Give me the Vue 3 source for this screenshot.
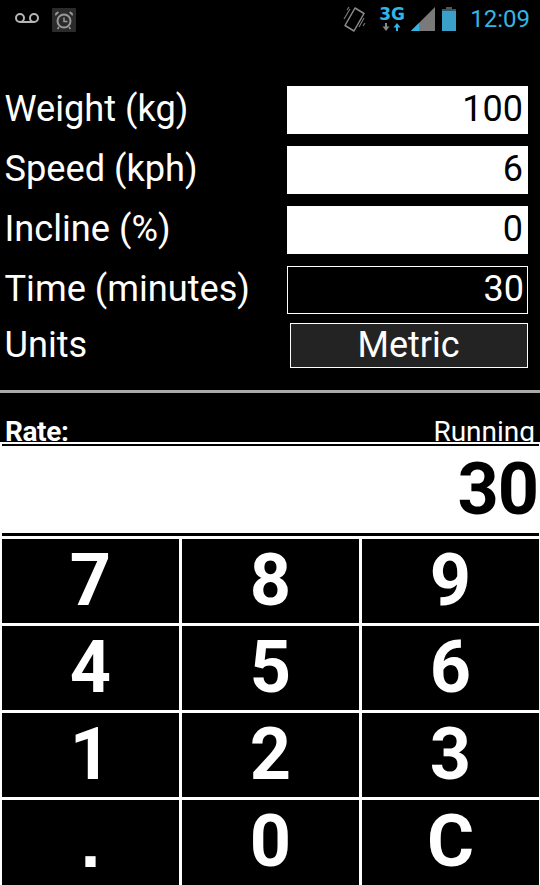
<script setup>
const rows = [
  { label: 'Weight (kg)', value: '100', cls: 'solid' },
  { label: 'Speed (kph)', value: '6', cls: 'solid' },
  { label: 'Incline (%)', value: '0', cls: 'solid' },
  { label: 'Time (minutes)', value: '30', cls: 'outline' },
]
const keys = ['7', '8', '9', '4', '5', '6', '1', '2', '3', '.', '0', 'C']
</script>

<template>
  <div class="screen">
    <header class="status">
      <div class="status-left">
        <svg class="voicemail" width="24" height="10" viewBox="0 0 24 10">
          <circle cx="5" cy="5" r="4" fill="none" stroke="#b5b5b5" stroke-width="2" />
          <circle cx="19" cy="5" r="4" fill="none" stroke="#b5b5b5" stroke-width="2" />
          <path d="M5 9H19" stroke="#b5b5b5" stroke-width="2" />
        </svg>
        <svg class="alarm" width="24" height="24" viewBox="0 0 24 24">
          <rect width="24" height="24" rx="1" fill="#2b2b2b" />
          <circle cx="12" cy="13" r="6.5" fill="none" stroke="#999" stroke-width="2" />
          <path d="M12 9.5V13.5H15.5" fill="none" stroke="#999" stroke-width="1.5" />
          <path d="M3.5 8 7 4.5 5.5 3.5 3 5.5ZM20.5 8 17 4.5 18.5 3.5 21 5.5Z" fill="#999" />
          <path d="M7 19 5.5 21M17 19 18.5 21" stroke="#999" stroke-width="1.5" />
        </svg>
      </div>
      <div class="status-right">
        <svg width="24" height="26" viewBox="0 0 24 26">
          <path d="M12 2 21 7.5 11 25 2 19.5Z" fill="none" stroke="#8c8c8c" stroke-width="1.5" stroke-linejoin="round" />
          <path d="M1 13 7 3M4 4 6 1M21 12 16 21M20 20 22 17" fill="none" stroke="#777" stroke-width="1.2" />
        </svg>
        <div class="net">
          <span class="net-label">3G</span>
          <svg class="net-arrows" width="25" height="8" viewBox="0 0 25 8">
            <path d="M7 0V4" stroke="#888" stroke-width="2" />
            <path d="M3.5 3.5H10.5L7 8Z" fill="#888" />
            <path d="M18 8V4" stroke="#33b5e5" stroke-width="2" />
            <path d="M14.5 4.5H21.5L18 0Z" fill="#33b5e5" />
          </svg>
        </div>
        <svg class="signal" width="24" height="24" viewBox="0 0 24 24">
          <path d="M0 24 24 0V24Z" fill="#7a7a7a" />
          <path d="M0 24 8 16V24Z" fill="#33b5e5" />
        </svg>
        <svg class="battery" width="16" height="24" viewBox="0 0 16 24">
          <rect x="5" y="0" width="6" height="2" fill="#555" />
          <rect x="1" y="2" width="14" height="22" fill="#3a9fc9" />
          <rect x="1" y="2" width="14" height="2" fill="#2b5a6e" />
        </svg>
        <span class="clock">12:09</span>
      </div>
    </header>

    <section class="form">
      <div v-for="row in rows" :key="row.label" class="row">
        <span class="label">{{ row.label }}</span>
        <div class="field" :class="row.cls">{{ row.value }}</div>
      </div>
      <div class="row units">
        <span class="label">Units</span>
        <button class="units-btn" type="button">Metric</button>
      </div>
    </section>

    <hr class="divider" />

    <section class="rate">
      <span class="rate-name">Rate:</span>
      <span class="rate-kind">Running</span>
    </section>

    <div class="lower">
      <div class="band thin"></div>
      <div class="result">30</div>
      <div class="band"></div>
      <div class="pad">
        <div v-for="key in keys" :key="key" class="key" :class="{ dot: key === '.' }">{{ key }}</div>
      </div>
    </div>
  </div>
</template>

<style scoped>
.screen {
  width: 540px;
  height: 885px;
  overflow: hidden;
  background: #000;
  color: #fff;
  font-family: Roboto, "Liberation Sans", sans-serif;
  display: flex;
  flex-direction: column;
}
.status {
  height: 38px;
  display: flex;
  justify-content: space-between;
  align-items: center;
  flex: none;
}
.status-left {
  display: flex;
  align-items: center;
  gap: 13px;
  padding-left: 15px;
}
.voicemail { margin-bottom: 2px; }
.alarm { margin-top: 2px; }
.status-right {
  display: flex;
  align-items: center;
  padding-right: 10px;
}
.net {
  display: flex;
  flex-direction: column;
  margin-left: 12px;
  width: 28px;
  height: 24px;
}
.net-label {
  font-family: "DejaVu Sans", sans-serif;
  font-size: 17px;
  font-weight: 700;
  line-height: 15px;
  color: #33b5e5;
}
.net-arrows { margin-top: 1px; }
.signal { margin-left: 4px; }
.battery { margin-left: 6px; }
.clock {
  color: #33b5e5;
  font-size: 24px;
  margin-left: 13px;
}
.form {
  margin-top: 48px;
  padding: 0 12px 0 0;
  display: flex;
  flex-direction: column;
  gap: 12px;
  flex: none;
}
.row {
  display: flex;
  align-items: flex-start;
  justify-content: space-between;
  height: 48px;
}
.label {
  font-size: 36.2px;
  padding-left: 4.5px;
  line-height: 46px;
}
.field {
  box-sizing: border-box;
  width: 241px;
  height: 48px;
  text-align: right;
  font-size: 36px;
}
.solid {
  background: #fff;
  color: #000;
  line-height: 46px;
  padding-right: 5px;
}
.outline {
  background: #000;
  color: #fff;
  border: 1px solid #fff;
  line-height: 44px;
  padding-right: 3px;
}
.units {
  height: 45px;
  margin-top: -3px;
}
.units .label { line-height: 44px; }
.units-btn {
  box-sizing: border-box;
  width: 238px;
  height: 45px;
  background: #232323;
  border: 1px solid #fff;
  color: #fff;
  font: 36px Roboto, "Liberation Sans", sans-serif;
  padding: 0 1px 4px 0;
}
.divider {
  margin: 22px 0 0;
  border: 0;
  height: 3px;
  background: #aaa;
  flex: none;
}
.rate {
  margin-top: 18px;
  height: 31px;
  overflow: hidden;
  display: flex;
  justify-content: space-between;
  align-items: flex-start;
  padding: 0 5px;
  font-size: 28px;
  line-height: 41px;
  flex: none;
}
.rate-name {
  font-weight: 700;
  letter-spacing: -0.4px;
}
.lower {
  flex: 1;
  min-height: 0;
  display: flex;
  flex-direction: column;
  background: #fff;
  padding: 2px 1px 0 2px;
}
.band {
  height: 3px;
  background: #000;
  flex: none;
}
.band.thin { height: 2px; }
.result {
  height: 87px;
  color: #000;
  font-size: 72px;
  font-weight: 700;
  letter-spacing: -1px;
  line-height: 87px;
  text-align: right;
  padding-right: 1px;
  flex: none;
}
.pad {
  margin-top: 3px;
  flex: 1;
  min-height: 0;
  display: grid;
  grid-template-columns: repeat(3, 177px);
  grid-template-rows: 84px 84px 84px 1fr;
  gap: 3px;
}
.key {
  background: #000;
  color: #fff;
  font-size: 72px;
  font-weight: 700;
  line-height: 84px;
  text-align: center;
}
.key.dot {
  font-family: "Liberation Sans", sans-serif;
}
</style>
